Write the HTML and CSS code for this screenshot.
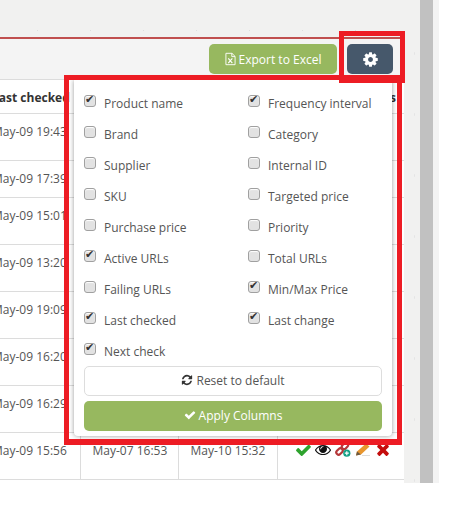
FILE: index.html
```html
<!DOCTYPE html>
<html lang="en">
<head>
    <meta charset="UTF-8">
    <meta name="viewport" content="width=device-width, initial-scale=1.0">
    <title>Price monitor columns</title>
    <link rel="stylesheet" href="styles.css">
</head>
<body>
    <div class="frame">
        <div class="main">
            <div class="top-strip"></div>
            <div class="toolbar">
                <button class="btn btn-export">
                    <svg class="icon-file" viewBox="0 0 12 14"><path d="M1 .8h6.6L11 4.2v9H1z" fill="none" stroke="#fff" stroke-width="1"/><path d="M7.4.8v3.6H11" fill="none" stroke="#fff" stroke-width="1"/><path d="M3.6 6.4l4.4 5M8 6.4l-4.4 5" stroke="#fff" stroke-width="1.3"/></svg>
                    Export to Excel
                </button>
                <button class="btn btn-gear">
                    <svg class="icon-gear" viewBox="0 0 1792 1792"><path fill="#fff" d="M1152 896q0-106-75-181t-181-75-181 75-75 181 75 181 181 75 181-75 75-181zm512-109v222q0 12-8 23t-20 13l-185 28q-19 54-39 91 35 50 107 138 10 12 10 25t-9 23q-27 37-99 108t-94 71q-12 0-26-9l-138-108q-44 23-91 38-16 136-29 186-7 28-36 28h-222q-14 0-24.5-8.5t-11.5-21.5l-28-184q-49-16-90-37l-141 107q-10 9-25 9-14 0-25-11-126-114-165-168-7-10-7-23 0-12 8-23 15-21 51-66.5t54-70.5q-27-50-41-99l-183-27q-13-2-21-12.5t-8-23.5v-222q0-12 8-23t19-13l186-28q14-46 39-92-40-57-107-138-10-12-10-24 0-10 9-23 26-36 98.5-107.5t94.5-71.5q13 0 26 10l138 107q44-23 91-38 16-136 29-186 7-28 36-28h222q14 0 24.5 8.5t11.5 21.5l28 184q49 16 90 37l142-107q9-9 24-9 13 0 25 10 129 119 165 170 7 8 7 22 0 12-8 23-15 21-51 66.5t-54 70.5q26 50 41 98l183 28q13 2 21 12.5t8 23.5z"/></svg>
                </button>
            </div>
            <div class="table-wrap">
                <table class="data">
                    <colgroup>
                        <col class="col-a"><col class="col-b"><col class="col-c"><col class="col-d">
                    </colgroup>
                    <thead>
                        <tr class="row-head"><th>Last checked</th><th></th><th></th><th class="th-actions">Actions</th></tr>
                    </thead>
                    <tbody>
                        <tr class="row-tall"><td>May-09 19:43</td><td></td><td></td><td></td></tr>
                        <tr class="row-short"><td>May-09 17:39</td><td></td><td></td><td></td></tr>
                        <tr class="row-tall"><td>May-09 15:01</td><td></td><td></td><td></td></tr>
                        <tr class="row-tall"><td>May-09 13:20</td><td></td><td></td><td></td></tr>
                        <tr class="row-tall"><td>May-09 19:09</td><td></td><td></td><td></td></tr>
                        <tr class="row-tall"><td>May-09 16:20</td><td></td><td></td><td></td></tr>
                        <tr class="row-tall"><td>May-09 16:29</td><td></td><td></td><td></td></tr>
                        <tr class="row-tall">
                            <td>May-09 15:56</td>
                            <td>May-07 16:53</td>
                            <td>May-10 15:32</td>
                            <td>
                                <div class="actions">
                                    <svg class="act act-check" viewBox="120 330 1560 1130"><path fill="#2ea32e" d="M1671 566q0-40-28-68l-136-136q-28-28-68-28t-68 28l-656 657-294-295q-28-28-68-28t-68 28l-136 136q-28 28-28 68t28 68l362 362 136 136q28 28 68 28t68-28l136-136 724-724q28-28 28-68z"/></svg>
                                    <svg class="act act-eye" viewBox="0 320 1792 1150"><path fill="#111" d="M1664 960q-152-236-381-353 61 104 61 225 0 185-131.5 316.5t-316.5 131.5-316.5-131.5-131.5-316.5q0-121 61-225-229 117-381 353 133 205 333.5 326.5t434.5 121.5 434.5-121.5 333.5-326.5zm-720-384q0-20-14-34t-34-14q-125 0-214.5 89.5t-89.5 214.5q0 20 14 34t34 14 34-14 14-34q0-86 61-147t147-61q20 0 34-14t14-34zm848 384q0 34-20 69-140 230-376.5 368.5t-499.5 138.5-499.5-139-376.5-368q-20-35-20-69t20-69q140-229 376.5-368t499.5-139 499.5 139 376.5 368q20 35 20 69z"/></svg>
                                    <svg class="act act-link" viewBox="0 0 16 15">
                                        <g fill="none" stroke="#b5383a" stroke-width="2.2">
                                            <rect x="1" y="7.2" width="7" height="4.6" rx="2.2" transform="rotate(-45 4.5 9.5)"/>
                                            <rect x="6.6" y="1.6" width="7" height="4.6" rx="2.2" transform="rotate(-45 10 4)"/>
                                        </g>
                                        <circle cx="11.8" cy="11.2" r="3.6" fill="#14a085"/>
                                        <path d="M11.8 9.2v4M9.8 11.2h4" stroke="#fff" stroke-width="1.2"/>
                                    </svg>
                                    <svg class="act act-pencil" viewBox="0 0 17 13">
                                        <path d="M1 12.5l1-4L11 .5l3.5 3-8.5 8z" fill="#e8962e"/>
                                        <path d="M1 12.5l1-4 4 3z" fill="#6b5a45"/>
                                        <path d="M7 12.5h8" stroke="#ddd" stroke-width="1"/>
                                    </svg>
                                    <svg class="act act-times" viewBox="300 240 1190 1320"><path fill="#c40d0d" d="M1490 1322q0 40-28 68l-136 136q-28 28-68 28t-68-28l-294-294-294 294q-28 28-68 28t-68-28l-136-136q-28-28-28-68t28-68l294-294-294-294q-28-28-28-68t28-68l136-136q28-28 68-28t68 28l294 294 294-294q28-28 68-28t68 28l136 136q28 28 28 68t-28 68l-294 294 294 294q28 28 28 68z"/></svg>
                                </div>
                            </td>
                        </tr>
                    </tbody>
                </table>
            </div>
        </div>
        <div class="gutter"></div>
        <div class="scrollbar"></div>
        <div class="edge"></div>
    </div>

    <div class="columns-menu">
        <div class="columns-grid">
            <label class="opt"><input type="checkbox" checked><span>Product name</span></label>
            <label class="opt"><input type="checkbox" checked><span>Frequency interval</span></label>
            <label class="opt"><input type="checkbox"><span>Brand</span></label>
            <label class="opt"><input type="checkbox"><span>Category</span></label>
            <label class="opt"><input type="checkbox"><span>Supplier</span></label>
            <label class="opt"><input type="checkbox"><span>Internal ID</span></label>
            <label class="opt"><input type="checkbox"><span>SKU</span></label>
            <label class="opt"><input type="checkbox"><span>Targeted price</span></label>
            <label class="opt"><input type="checkbox"><span>Purchase price</span></label>
            <label class="opt"><input type="checkbox"><span>Priority</span></label>
            <label class="opt"><input type="checkbox" checked><span>Active URLs</span></label>
            <label class="opt"><input type="checkbox"><span>Total URLs</span></label>
            <label class="opt"><input type="checkbox"><span>Failing URLs</span></label>
            <label class="opt"><input type="checkbox" checked><span>Min/Max Price</span></label>
            <label class="opt"><input type="checkbox" checked><span>Last checked</span></label>
            <label class="opt"><input type="checkbox" checked><span>Last change</span></label>
            <label class="opt"><input type="checkbox" checked><span>Next check</span></label>
        </div>
        <button class="btn btn-reset">
            <svg class="icon-small" viewBox="0 0 1792 1792"><path fill="#333" d="M1639 1056q0 5-1 7-64 268-268 434.5t-478 166.5q-146 0-282.5-55t-243.5-157l-129 129q-19 19-45 19t-45-19-19-45v-448q0-26 19-45t45-19h448q26 0 45 19t19 45-19 45l-137 137q71 66 161 102t187 36q134 0 250-65t186-179q11-17 53-117 8-23 30-23h192q13 0 22.5 9.5t9.5 22.5zm25-800v448q0 26-19 45t-45 19h-448q-26 0-45-19t-19-45 19-45l138-138q-148-137-349-137-134 0-250 65t-186 179q-11 17-53 117-8 23-30 23h-199q-13 0-22.5-9.5t-9.5-22.5v-7q65-268 270-434.5t480-166.5q146 0 284 55.5t245 156.5l130-129q19-19 45-19t45 19 19 45z"/></svg>
            Reset to default
        </button>
        <button class="btn btn-apply">
            <svg class="icon-small" viewBox="0 0 1792 1792"><path fill="#fff" d="M1671 566q0-40-28-68l-136-136q-28-28-68-28t-68 28l-656 657-294-295q-28-28-68-28t-68 28l-136 136q-28 28-28 68t28 68l362 362 136 136q28 28 68 28t68-28l136-136 724-724q28-28 28-68z"/></svg>
            Apply Columns
        </button>
    </div>

    <div class="mark mark-gear"></div>
    <div class="mark mark-panel"></div>
</body>
</html>
```

FILE: styles.css
```css
* {
    box-sizing: border-box;
}
html, body {
    height: 100%;
}
body {
    margin: 0;
    position: relative;
    overflow: hidden;
    background-color: #ffffff;
    font-family: "Open Sans", Arial, sans-serif;
    font-size: 12px;
    color: #555555;
}
.frame {
    display: flex;
    height: 483px;
}
.main {
    width: 404px;
    display: flex;
    flex-direction: column;
}
.top-strip, .gutter {
    background-color: #f1f1f0;
    background-image: radial-gradient(#dedede 0.5px, transparent 1px), radial-gradient(#e4e4e4 0.5px, transparent 1px);
    background-size: 53px 47px, 37px 61px;
    background-position: 11px 7px, 29px 23px;
}
.top-strip {
    height: 39px;
    border-bottom: 2px solid #c0504f;
}
.gutter {
    width: 16px;
}
.scrollbar {
    width: 13px;
    background-color: #c1c1c1;
}
.edge {
    width: 6px;
    background-color: #f3f3f3;
}
.toolbar {
    height: 40px;
    display: flex;
    justify-content: flex-end;
    gap: 10px;
    padding: 5px 11px 0 0;
    background-color: #f4f4f4;
}
.btn {
    height: 30px;
    display: flex;
    align-items: center;
    justify-content: center;
    gap: 3px;
    border: none;
    border-radius: 5px;
    font-family: inherit;
    font-size: 12px;
    padding: 0;
}
.btn-export {
    width: 128px;
    background-color: #97b85f;
    color: #ffffff;
}
.icon-file {
    width: 11px;
    height: 14px;
}
.btn-gear {
    width: 46px;
    background-color: #46586b;
}
.icon-gear {
    width: 17px;
    height: 17px;
}
.table-wrap {
    flex: 1;
    overflow: hidden;
    background-color: #ffffff;
    border-top: 1px solid #dcdcdc;
}
.data {
    width: 424px;
    margin-left: -20px;
    table-layout: fixed;
    border-collapse: collapse;
}
.col-a { width: 100px; }
.col-b { width: 98px; }
.col-c { width: 99px; }
.col-d { width: 127px; }
.data th, .data td {
    padding: 9px 0 0 12px;
    border-right: 1px solid #dcdcdc;
    border-bottom: 1px solid #dcdcdc;
    vertical-align: top;
    text-align: left;
    white-space: nowrap;
    overflow: hidden;
}
.data th:last-child, .data td:last-child {
    border-right: none;
}
.data th {
    font-weight: 700;
    color: #333333;
}
.data th.th-actions {
    padding: 9px 8px 0 0;
    text-align: right;
}
.row-head { height: 33px; }
.row-tall { height: 47px; }
.row-short { height: 37px; }
.actions {
    display: flex;
    align-items: center;
    gap: 4px;
    height: 14px;
    padding: 2px 0 0 6px;
}
.act {
    flex: none;
    height: 12px;
}
.act-check { width: 15px; }
.act-eye { width: 16px; height: 11px; }
.act-link { width: 16px; height: 15px; }
.act-pencil { width: 17px; height: 13px; }
.act-times { width: 14px; height: 13px; }
.columns-menu {
    position: absolute;
    left: 74px;
    top: 80px;
    width: 318px;
    height: 356px;
    display: flex;
    flex-direction: column;
    gap: 5px;
    padding: 8px 10px 5px;
    background-color: #ffffff;
    border-radius: 0 0 4px 4px;
    box-shadow: 0 0 5px rgba(0, 0, 0, 0.4);
}
.columns-grid {
    display: grid;
    grid-template-columns: 164px 134px;
    grid-auto-rows: 31px;
    margin-bottom: -6px;
}
.opt {
    display: flex;
    align-items: center;
    gap: 8px;
}
.opt input {
    appearance: none;
    width: 12px;
    height: 12px;
    margin: 0 0 5px 0;
    position: relative;
    border: 1px solid #a0a0a0;
    border-radius: 3px;
    background-color: #e2e2e2;
    box-shadow: inset 0 1px 1px #ffffff;
}
.opt input:checked::after {
    content: "\2714";
    position: absolute;
    left: 0;
    top: -3px;
    font-family: "DejaVu Sans", sans-serif;
    font-size: 11px;
    color: #333333;
}
.btn-reset, .btn-apply {
    width: 298px;
    padding-bottom: 2px;
}
.btn-reset {
    background-color: #ffffff;
    border: 1px solid #dddddd;
    color: #555555;
}
.btn-apply {
    background-color: #97b85f;
    color: #ffffff;
}
.icon-small {
    width: 12px;
    height: 12px;
}
.mark {
    position: absolute;
    border: 5px solid #ed1c24;
}
.mark-gear {
    left: 339px;
    top: 31px;
    width: 66px;
    height: 52px;
}
.mark-panel {
    left: 64px;
    top: 75px;
    width: 338px;
    height: 370px;
    border-width: 5px 5px 6px 5px;
}
```
